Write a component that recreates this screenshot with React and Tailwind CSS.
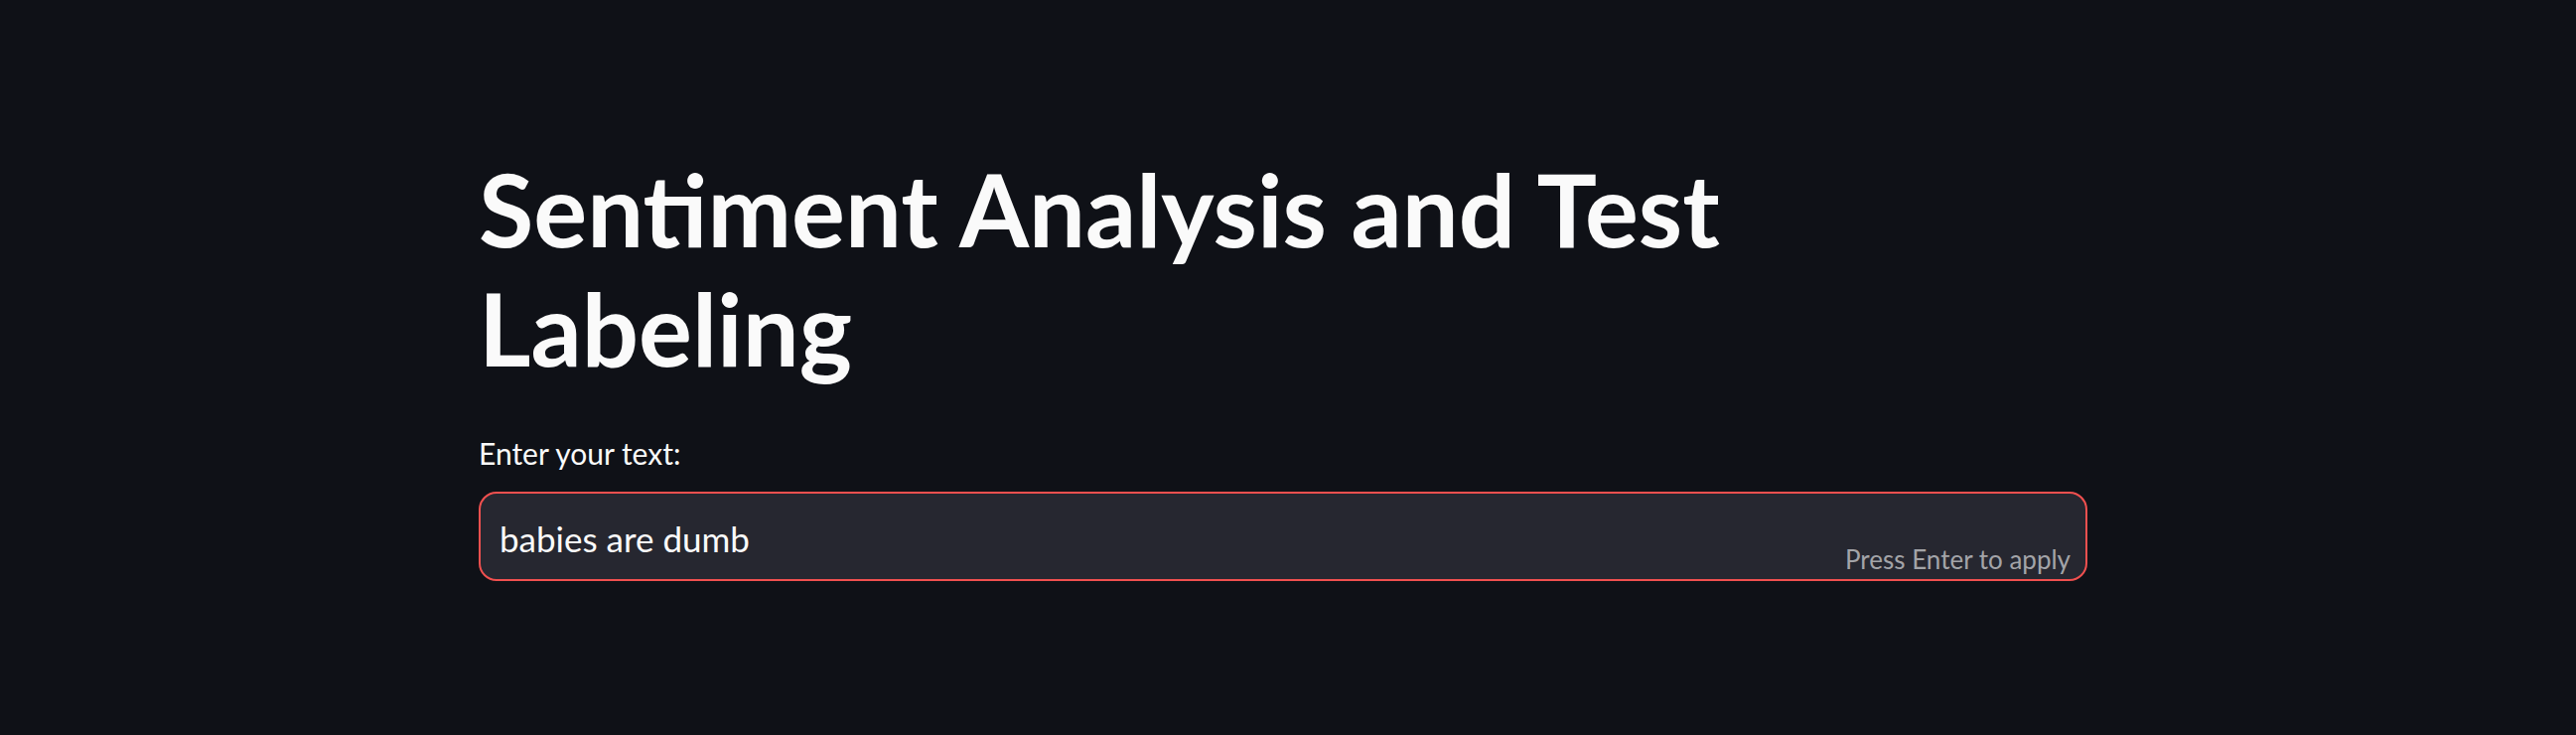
export default function App() {
  return (
    <div className="bg-[#0f1117] min-h-[740px] text-[#fafafa]" style={{ fontFamily: 'Lato, "Open Sans", sans-serif' }}>
      <div className="ml-[482px] w-[1620px] pt-[150px]">
        <h1 className="text-[101px] leading-[120px] font-bold w-[1300px]">Sentiment Analysis and Test Labeling</h1>
        <label className="block mt-[48px] text-[30px] leading-[36px]">Enter your text:</label>
        <div className="relative mt-[21px] h-[90px] rounded-[18px] border-2 border-[#f0504f] bg-[#262730] flex items-center pl-[19px]">
          <span className="text-[35px] leading-[40px] pt-[4px]">babies are dumb</span>
          <span className="absolute right-[15px] bottom-[4px] text-[26px] leading-[32px] text-[#a3a4a8]">Press Enter to apply</span>
        </div>
      </div>
    </div>
  );
}
